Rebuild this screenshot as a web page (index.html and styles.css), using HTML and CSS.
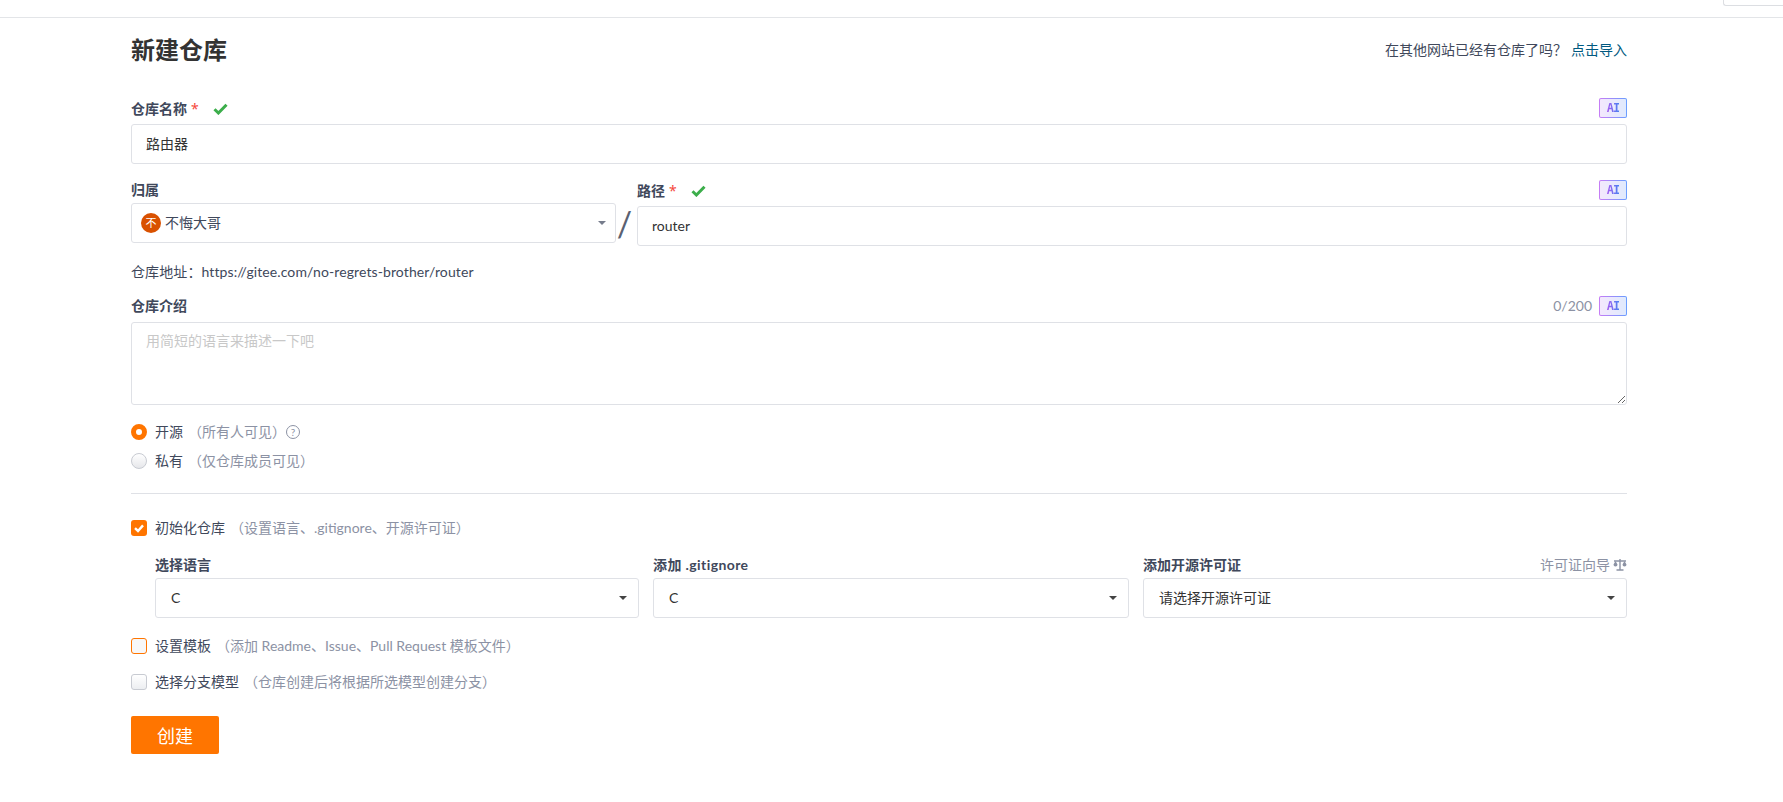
FILE: index.html
```html
<!DOCTYPE html>
<html lang="zh-CN">
<head>
<meta charset="utf-8">
<title>新建仓库</title>
<link rel="stylesheet" href="styles.css">
</head>
<body>
<header class="topbar"><div class="topbar-box"></div></header>
<main class="page">
  <div class="head">
    <h1 class="title">新建仓库</h1>
    <div class="import">在其他网站已经有仓库了吗？<a class="import-link" href="#">点击导入</a></div>
  </div>

  <div class="label-row first">
    <span class="label">仓库名称<span class="star">*</span></span>
    <svg class="ok" viewBox="0 0 15 12"><path d="M1.5 6.2 5.4 10 13.5 1.8" fill="none" stroke="#3cae4b" stroke-width="3"/></svg>
    <span class="ai"><span class="ai-text">AI</span></span>
  </div>
  <input class="input" type="text" value="路由器">

  <div class="owner-path">
    <div class="owner">
      <div class="label-row tight"><span class="label">归属</span></div>
      <div class="select">
        <span class="avatar">不</span><span class="owner-name">不悔大哥</span>
        <span class="caret caret-light"></span>
      </div>
    </div>
    <div class="slash">/</div>
    <div class="path">
      <div class="label-row">
        <span class="label">路径<span class="star">*</span></span>
        <svg class="ok" viewBox="0 0 15 12"><path d="M1.5 6.2 5.4 10 13.5 1.8" fill="none" stroke="#3cae4b" stroke-width="3"/></svg>
        <span class="ai"><span class="ai-text">AI</span></span>
      </div>
      <input class="input" type="text" value="router">
    </div>
  </div>

  <div class="address">仓库地址：https://gitee.com/no-regrets-brother/router</div>

  <div class="label-row desc">
    <span class="label">仓库介绍</span>
    <span class="count">0/200</span>
    <span class="ai count-ai"><span class="ai-text">AI</span></span>
  </div>
  <textarea class="textarea" placeholder="用简短的语言来描述一下吧"></textarea>

  <div class="option radio-first">
    <span class="radio radio-on"></span><span class="opt-text">开源</span><span class="hint">（所有人可见）</span><span class="help">?</span>
  </div>
  <div class="option radio-second">
    <span class="radio"></span><span class="opt-text">私有</span><span class="hint">（仅仓库成员可见）</span>
  </div>

  <div class="divider"></div>

  <div class="option init">
    <span class="check check-on"><svg viewBox="0 0 16 16"><path d="M4 8.2 7 11 12 5.4" fill="none" stroke="#fff" stroke-width="2.4"/></svg></span>
    <span class="opt-text">初始化仓库</span><span class="hint">（设置语言、.gitignore、开源许可证）</span>
  </div>

  <div class="init-grid">
    <div>
      <div class="sub-label"><span class="label">选择语言</span></div>
      <div class="select">C<span class="caret"></span></div>
    </div>
    <div>
      <div class="sub-label"><span class="label label-latin">添加 .gitignore</span></div>
      <div class="select">C<span class="caret"></span></div>
    </div>
    <div>
      <div class="sub-label">
        <span class="label">添加开源许可证</span>
        <span class="guide">许可证向导
          <svg class="scale" viewBox="0 0 14 12"><path d="M7 0v11M3.5 11h7M1 2h12" fill="none" stroke="#8c92a4" stroke-width="1.4"/><path d="M.5 5.5a2 2 0 0 0 4 0L2.5 2ZM9.5 5.5a2 2 0 0 0 4 0L11.5 2Z" fill="#8c92a4"/></svg>
        </span>
      </div>
      <div class="select">请选择开源许可证<span class="caret"></span></div>
    </div>
  </div>

  <div class="option template">
    <span class="check check-focus"></span><span class="opt-text">设置模板</span><span class="hint">（添加 Readme、Issue、Pull Request 模板文件）</span>
  </div>
  <div class="option branch">
    <span class="check"></span><span class="opt-text">选择分支模型</span><span class="hint">（仓库创建后将根据所选模型创建分支）</span>
  </div>

  <button class="submit" type="button">创建</button>
</main>
</body>
</html>
```
FILE: styles.css
```css
* { box-sizing: border-box; }
html, body { margin: 0; padding: 0; background: #fff; }
body {
  font-family: Lato, "Noto Sans CJK SC", sans-serif;
  font-size: 14px;
  line-height: 20px;
  color: #40485b;
  height: 802px;
  overflow: hidden;
}
.topbar {
  height: 18px;
  border-bottom: 1px solid #e3e5e8;
  display: flex;
  justify-content: flex-end;
}
.topbar-box {
  width: 60px;
  height: 6px;
  border: 1px solid #dcdee2;
  border-top: 0;
  border-right: 0;
  border-bottom-left-radius: 3px;
}
.page { width: 1496px; margin-left: 131px; }
.head {
  display: flex;
  justify-content: space-between;
  align-items: center;
  height: 32px;
  margin-top: 16px;
}
.title { margin: 0; font-size: 24px; line-height: 32px; font-weight: 700; color: #333; }
.import { color: #40485b; font-size: 14px; }
.import-link { color: #005980; text-decoration: none; margin-left: 4px; }

.label-row { display: flex; align-items: center; height: 20px; margin-bottom: 6px; }
.label-row.first { margin-top: 32px; }
.label-row.tight { margin-bottom: 3px; }
.label { font-weight: 700; color: #40485b; font-size: 14px; }
.label-row.first .label, .path .label { position: relative; top: 1px; }
.label-latin { letter-spacing: .4px; }
.star { color: #f5483b; margin-left: 4px; font-weight: 400; font-family: "Noto Sans", sans-serif; }
.ok { width: 15px; height: 12px; margin-left: 14px; position: relative; top: 1px; }
.ai {
  margin-left: auto;
  width: 28px;
  height: 20px;
  border: 1px solid transparent;
  border-radius: 2px;
  display: flex;
  align-items: center;
  justify-content: center;
  background:
    linear-gradient(90deg, #f3e8fd, #e0eafd) padding-box,
    linear-gradient(90deg, #c77df5, #6a9eff) border-box;
}
.ai-text {
  font-size: 12px;
  line-height: 14px;
  font-weight: 700;
  font-family: "DejaVu Sans Mono", monospace;
  letter-spacing: -1px;
  background: linear-gradient(90deg, #a65ef0, #4a80f2);
  -webkit-background-clip: text;
  background-clip: text;
  color: transparent;
}
.input {
  display: block;
  width: 100%;
  height: 40px;
  border: 1px solid #dfe1e6;
  border-radius: 3px;
  padding: 0 14px 2px;
  font: inherit;
  color: #333;
  background: #fff;
  outline: 0;
}
.owner-path { display: flex; margin-top: 16px; }
.owner { width: 485px; }
.path { flex: 1; }
.slash {
  width: 21px;
  height: 66px;
  padding: 24px 4px 0 0;
  text-align: center;
  font-size: 34px;
  line-height: 40px;
  color: #5a6172;
  font-weight: 400;
}
.select {
  position: relative;
  display: flex;
  align-items: center;
  height: 40px;
  border: 1px solid #dfe1e6;
  border-radius: 3px;
  padding: 0 15px 1px;
  color: #333;
  background: #fff;
}
.owner .select { padding-left: 9px; color: #40485b; }
.avatar {
  width: 20px;
  height: 20px;
  border-radius: 50%;
  background: #d95100;
  color: #fff;
  font-size: 11px;
  line-height: 20px;
  text-align: center;
  margin-right: 4px;
}
.owner-name { color: #40485b; }
.caret {
  position: absolute;
  right: 11px;
  top: 17px;
  width: 0;
  height: 0;
  border-left: 4px solid transparent;
  border-right: 4px solid transparent;
  border-top: 4px solid #444;
}
.caret-light { border-top-color: #767c8c; right: 9px; }
.address { margin-top: 16px; height: 20px; color: #40485b; letter-spacing: .1px; }
.label-row.desc { margin-top: 14px; }
.count { margin-left: auto; color: #8c92a4; }
.count-ai { margin-left: 7px; }
.textarea {
  display: block;
  width: 100%;
  height: 83px;
  border: 1px solid #dfe1e6;
  border-radius: 3px;
  padding: 8px 14px;
  font: inherit;
  color: #333;
  background: #fff;
  outline: 0;
  resize: vertical;
}
.textarea::placeholder { color: #c8c8c8; opacity: 1; }

.option { display: flex; align-items: center; height: 20px; }
.radio-first { margin-top: 17px; }
.radio-second { margin-top: 9px; }
.init { margin-top: 24px; }
.template { margin-top: 18px; }
.branch { margin-top: 16px; }
.opt-text { color: #40485b; margin-left: 8px; }
.hint { color: #8c92a4; margin-left: 5px; }
.help {
  width: 14px;
  height: 14px;
  border: 1px solid #8c92a4;
  border-radius: 50%;
  font-size: 10px;
  line-height: 12px;
  text-align: center;
  color: #8c92a4;
}
.radio {
  width: 16px;
  height: 16px;
  border-radius: 50%;
  border: 1px solid #c8cbd2;
  background: linear-gradient(180deg, #fff, #e6e7ea);
}
.radio-on { border: 5px solid #ff7500; background: #fff; }
.check {
  width: 16px;
  height: 16px;
  border-radius: 3px;
  border: 1px solid #c8cbd2;
  background: linear-gradient(180deg, #fff, #eceef1);
  display: block;
}
.check svg { display: block; width: 16px; height: 16px; }
.check-on { border: 0; background: #ff7500; }
.check-focus { border-color: #ff7500; background: #f7f7f8; }
.divider { height: 1px; background: #dfe1e6; margin-top: 22px; }
.init-grid {
  display: grid;
  grid-template-columns: 484px 476px 484px;
  column-gap: 14px;
  padding-left: 24px;
  margin-top: 17px;
}
.sub-label { display: flex; justify-content: space-between; align-items: center; height: 20px; margin-bottom: 3px; }
.guide { color: #8c92a4; display: flex; align-items: center; }
.scale { width: 14px; height: 12px; margin-left: 3px; }
.submit {
  display: block;
  width: 88px;
  height: 38px;
  margin-top: 24px;
  padding: 0;
  border: 0;
  border-radius: 2px;
  background: #ff7500;
  color: #fff;
  font-family: inherit;
  font-size: 18px;
}
```
